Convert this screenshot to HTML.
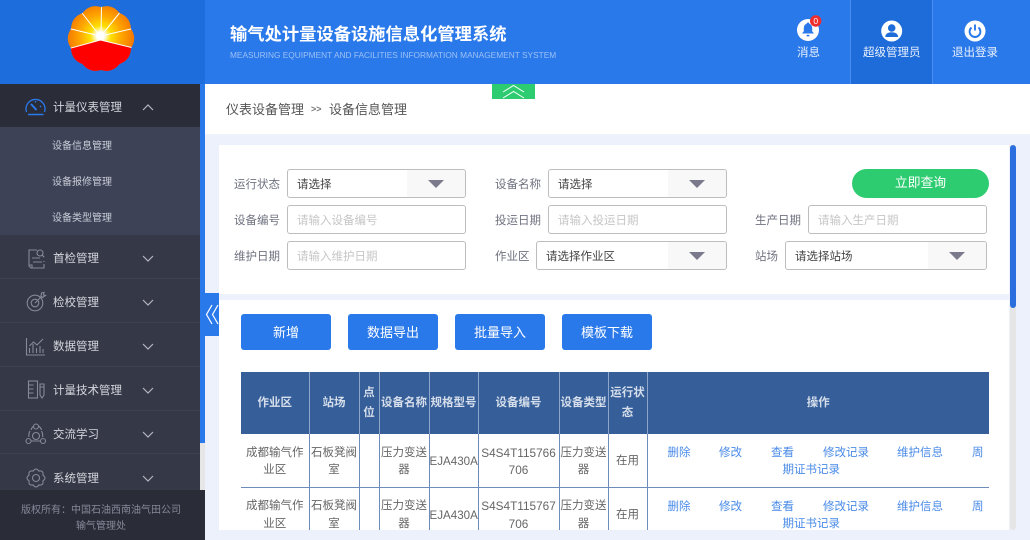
<!DOCTYPE html>
<html lang="zh"><head><meta charset="utf-8"><title>输气处计量设备设施信息化管理系统</title>
<style>
*{box-sizing:border-box;margin:0;padding:0}
html,body{width:1030px;height:540px;overflow:hidden;background:#edf1fb;font-family:"Liberation Sans","Noto Sans CJK SC",sans-serif}
.a{position:absolute;white-space:nowrap}
.t{position:absolute;white-space:nowrap;line-height:18px;font-size:11.5px}
.menu{color:#d5d7de;left:53px;margin-top:1px}
.sub{color:#c9ccd6;left:52px;font-size:10px;margin-top:2px}
.lb{color:#6f7280;margin-top:1px}
.box{position:absolute;height:29px;background:#fff;border:1px solid #bdbdbd;border-radius:3px;font-size:11.5px;line-height:31px;padding-left:9px;color:#444}
.ph{color:#c6c6c6}
.ar{position:absolute;right:0;top:0;bottom:0;width:58px;background:#f8f8f9;border-radius:0 3px 3px 0}
.ar:after{content:"";position:absolute;left:21px;top:10px;border-left:8px solid transparent;border-right:8px solid transparent;border-top:8px solid #7a7a8c}
.btn{position:absolute;top:314px;width:90px;height:36px;background:#2a79eb;border-radius:3px;color:#fff;font-size:13px;line-height:38px;text-align:center}
table{position:absolute;left:0;top:0;width:748px;table-layout:fixed;border-collapse:collapse;font-size:11.5px;line-height:17.3px;text-align:center;color:#666}
th{background:#365f9a;color:#d5deea;font-weight:bold;height:62px;border-left:1px solid #8ea6ca;border-right:1px solid #8ea6ca;padding:1px 0 0;line-height:19.5px}
td{height:53.5px;border-left:1px solid #6d8cbb;border-right:1px solid #6d8cbb;border-bottom:1px solid #6d8cbb;padding:3px 0 0;position:relative;word-break:break-all}
th:first-child,td:first-child{border-left:0}th:last-child,td:last-child{border-right:0}
td a{position:absolute;color:#4a8be8;white-space:nowrap;text-decoration:none}
.l{font-size:11.8px}
.n{white-space:nowrap;word-break:normal;font-size:11.6px;overflow:visible}
</style></head><body>

<div class="a" style="left:205px;top:0;width:825px;height:84px;background:#2a79eb"></div>
<div class="a" style="left:0;top:0;width:205px;height:84px;background:#1d6ddd"></div>
<div class="a" style="left:850px;top:0;width:83px;height:84px;background:#1e6cd9;border-left:1px solid #4a8df0;border-right:1px solid #4a8df0"></div>

<svg class="a" style="left:0;top:0" width="205" height="84" viewBox="0 0 205 84">
<defs>
<radialGradient id="g" gradientUnits="userSpaceOnUse" cx="100.5" cy="36" r="37">
<stop offset="0" stop-color="#fff"/><stop offset=".1" stop-color="#fff"/><stop offset=".28" stop-color="#ffe000"/><stop offset=".55" stop-color="#ffa800"/><stop offset="1" stop-color="#f06a00"/>
</radialGradient>
<clipPath id="fl"><path d="M101 7Q112.3 3.800 119.500 13Q130.500 17 131 28.800Q137.500 38.500 131 48.200Q130.500 60 119.500 64Q112.300 73.200 101 70Q89.700 73.200 82.500 64Q71.500 60 71 48.200Q64.500 38.500 71 28.800Q71.500 17 82.500 13Q89.700 3.800 101 7Z"/></clipPath>
</defs>
<g clip-path="url(#fl)">
<rect x="60" y="0" width="82" height="80" fill="url(#g)"/>
<polygon points="100.500,40 140,50 140,80 60,80 60,51" fill="#f00"/>
<g stroke="#fff" stroke-width="1"><path d="M101 36L101.500 6M101 36L119.500 13M101 36L133 28.500M100 36L82 13M100 36L69 28.500"/><path d="M100.500 40L60 51M100.500 40L140 49.500"/></g>
<circle cx="100.500" cy="35.500" r="4" fill="#fff"/>
</g>
</svg>

<div class="a" style="left:230px;top:21px;font-size:17.3px;line-height:26px;font-weight:bold;color:#fff">输气处计量设备设施信息化管理系统</div>
<div class="a" style="left:230px;top:49px;font-size:8.34px;line-height:12px;color:#9cc0f5">MEASURING EQUIPMENT AND FACILITIES INFORMATION MANAGEMENT SYSTEM</div>

<svg class="a" style="left:790px;top:10px" width="210" height="36" viewBox="790 10 210 36">
<circle cx="808" cy="30" r="11" fill="#fff"/>
<path d="M808 22.5c-.8 0-1.3.6-1.4 1.2-2 .8-2.8 2.400-2.800 4.500v3l-1.800 2.300h12l-1.800-2.300v-3c0-2.100-.8-3.700-2.800-4.500-.1-.6-.6-1.200-1.400-1.200z" fill="#2a79eb"/>
<rect x="806.500" y="34.800" width="3" height="1.600" rx=".8" fill="#2a79eb"/>
<circle cx="815.700" cy="21" r="5.700" fill="#ee2d2d"/>
<text x="815.700" y="24" font-size="8.500" fill="#fff" text-anchor="middle" font-family="Liberation Sans">0</text>
<circle cx="891.700" cy="31" r="10.500" fill="#fff"/>
<circle cx="891.700" cy="28" r="3.800" fill="#1e6cd9"/>
<path d="M885.300 37c0-3.500 3-4.800 6.400-4.800s6.400 1.300 6.400 4.800z" fill="#1e6cd9"/>
<circle cx="975" cy="31" r="10.500" fill="#fff"/>
<path d="M971.500 27.500a5.400 5.400 0 1 0 7 0" fill="none" stroke="#2a79eb" stroke-width="1.900"/>
<path d="M975 24.500v6" stroke="#2a79eb" stroke-width="1.900"/>
</svg>
<div class="t" style="left:797px;top:44px;color:#e8f0fd">消息</div>
<div class="t" style="left:863px;top:44px;color:#e8f0fd">超级管理员</div>
<div class="t" style="left:952px;top:44px;color:#e8f0fd">退出登录</div>

<!-- sidebar -->
<div class="a" style="left:0;top:84px;width:200px;height:406px;background:#353846"></div>
<div class="a" style="left:0;top:84px;width:200px;height:43px;background:#2a2c38"></div>
<div class="a" style="left:0;top:127px;width:200px;height:108px;background:#3d4257"></div>
<div class="a" style="left:0;top:278px;width:200px;height:1px;background:#3e4150"></div>
<div class="a" style="left:0;top:322px;width:200px;height:1px;background:#3e4150"></div>
<div class="a" style="left:0;top:366px;width:200px;height:1px;background:#3e4150"></div>
<div class="a" style="left:0;top:410px;width:200px;height:1px;background:#3e4150"></div>
<div class="a" style="left:0;top:453px;width:200px;height:1px;background:#3e4150"></div>
<div class="a" style="left:200px;top:84px;width:5px;height:406px;background:#e6e6e6"></div>
<div class="a" style="left:200px;top:84px;width:5px;height:359px;background:#2a79eb"></div>
<div class="a" style="left:0;top:490px;width:205px;height:50px;background:#2a2c38"></div>

<div class="t menu" style="top:98px">计量仪表管理</div>
<div class="t sub" style="top:136px">设备信息管理</div>
<div class="t sub" style="top:172px">设备报修管理</div>
<div class="t sub" style="top:208px">设备类型管理</div>
<div class="t menu" style="top:249px">首检管理</div>
<div class="t menu" style="top:293px">检校管理</div>
<div class="t menu" style="top:337px">数据管理</div>
<div class="t menu" style="top:381px">计量技术管理</div>
<div class="t menu" style="top:425px">交流学习</div>
<div class="t menu" style="top:469px">系统管理</div>
<div class="a" style="left:21px;top:500px;font-size:10px;line-height:18px;color:#858999">版权所有<span style="font-family:'Noto Sans CJK TC',sans-serif">：</span>中国石油西南油气田公司</div>
<div class="a" style="left:76px;top:518px;font-size:10px;line-height:18px;color:#858999">输气管理处</div>

<svg class="a" style="left:0;top:84px" width="200" height="406" viewBox="0 84 200 406" fill="none" stroke-width="1">
<g stroke="#b5b7c0" stroke-width="1.200"><path d="M143 110l5-5 5 5"/><path d="M143 256l5 5 5-5M143 300l5 5 5-5M143 344l5 5 5-5M143 388l5 5 5-5M143 432l5 5 5-5M143 476l5 5 5-5"/></g>
<g stroke="#2a79eb" stroke-width="1.300"><path d="M26.500 112A9.500 9.500 0 1 1 44.500 112"/><path d="M31 104l5.500 6" stroke-width="2"/><path d="M28 114.500h15.500" stroke-width="1.500"/><path d="M35.500 101v1.500M41 106l-1 1"/></g>
<g stroke="#858998" stroke-width="1.100">
<path d="M37 250h-8v16l2 2h13v-4M44 262v-1M32 258h8M33 262h9M29 265h3v3"/><circle cx="40" cy="253" r="3"/><path d="M42.200 255.200l2 2"/>
<circle cx="35" cy="303" r="7.800"/><circle cx="35" cy="303" r="3.800"/><path d="M35 303l7-7M41 296l.5-3 2.500-.5-.5 2.500 2 .5-3 2z"/>
<path d="M26.500 338v17h18.500M29.500 353v-5M33 353v-9M36.500 353v-5M40 353v-7M43 353v-4M29.500 346l4-4 3.500 3 6-6"/>
<rect x="28.500" y="381" width="9" height="17"/><path d="M28.500 385h5M28.500 389h5M28.500 393h5"/><path d="M40 384h4v11l-2 3-2-3zM40 387h4"/>
<path d="M31 430a6.500 6.500 0 0 1 3-4M38.500 426a7 7 0 0 1 3 4M31 441h9"/><circle cx="36" cy="426.500" r="2.500"/><circle cx="28.500" cy="441" r="2.500"/><circle cx="43" cy="441" r="2.500"/><circle cx="36" cy="436" r="3.500"/><path d="M29 437a9 9 0 0 1 1-6M42.500 437a9 9 0 0 0-1-6"/>
<g transform="translate(36 478)"><path d="M6.900-2.900Q11 0 6.900 2.900Q7.800 7.800 2.900 6.900Q0 11-2.900 6.900Q-7.800 7.800-6.900 2.900Q-11 0-6.900-2.900Q-7.800-7.800-2.900-6.900Q0-11 2.900-6.900Q7.800-7.800 6.900-2.900Z"/><circle r="3.500"/></g>
</g>
</svg>

<!-- breadcrumb -->
<div class="a" style="left:205px;top:84px;width:825px;height:50px;background:#fff"></div>
<div class="a" style="left:492px;top:84px;width:43px;height:15px;background:#2ecc71"></div>
<svg class="a" style="left:492px;top:84px" width="43" height="15" fill="none" stroke="#fff" stroke-width="1"><path d="M11 8l10.500-6.500L32 8M11 14l10.500-6.500L32 14"/></svg>
<div class="a" style="left:226px;top:100px;font-size:13px;line-height:19px;color:#555">仪表设备管理</div>
<div class="a" style="left:311px;top:103px;font-size:9px;line-height:13px;color:#777;font-weight:bold">&gt;&gt;</div>
<div class="a" style="left:329px;top:100px;font-size:13px;line-height:19px;color:#555">设备信息管理</div>

<!-- collapse tab -->
<div class="a" style="left:205px;top:293px;width:14px;height:43px;background:#2a79eb"></div>
<svg class="a" style="left:205px;top:293px" width="15" height="43" fill="none" stroke="#fff" stroke-width="1.200"><path d="M7 12L1.500 21.500 7 31M13 12L7.500 21.500 13 31"/></svg>

<!-- panel 1 -->
<div class="a" style="left:219px;top:145px;width:790px;height:149px;background:#fff"></div>
<div class="t lb" style="left:234px;top:175px">运行状态</div>
<div class="t lb" style="left:234px;top:211px">设备编号</div>
<div class="t lb" style="left:234px;top:247px">维护日期</div>
<div class="t lb" style="left:495px;top:175px">设备名称</div>
<div class="t lb" style="left:495px;top:211px">投运日期</div>
<div class="t lb" style="left:495px;top:247px">作业区</div>
<div class="t lb" style="left:755px;top:211px">生产日期</div>
<div class="t lb" style="left:755px;top:247px">站场</div>
<div class="box" style="left:287px;top:169px;width:179px">请选择<i class="ar"></i></div>
<div class="box ph" style="left:287px;top:205px;width:179px">请输入设备编号</div>
<div class="box ph" style="left:287px;top:241px;width:179px">请输入维护日期</div>
<div class="box" style="left:548px;top:169px;width:179px">请选择<i class="ar"></i></div>
<div class="box ph" style="left:548px;top:205px;width:179px">请输入投运日期</div>
<div class="box" style="left:536px;top:241px;width:191px">请选择作业区<i class="ar"></i></div>
<div class="box ph" style="left:808px;top:205px;width:179px">请输入生产日期</div>
<div class="box" style="left:785px;top:241px;width:202px">请选择站场<i class="ar"></i></div>
<div class="a" style="left:852px;top:169px;width:137px;height:29px;border-radius:15px;background:#2ecc71;color:#fff;font-size:12.800px;line-height:28px;text-align:center">立即查询</div>

<!-- panel 2 -->
<div class="a" style="left:219px;top:300px;width:790px;height:230px;background:#fff"></div>
<div class="btn" style="left:241px">新增</div>
<div class="btn" style="left:348px">数据导出</div>
<div class="btn" style="left:455px">批量导入</div>
<div class="btn" style="left:562px">模板下载</div>

<div class="a" style="left:241px;top:372px;width:748px;height:158px;overflow:hidden;white-space:normal">
<table>
<colgroup><col style="width:68px"><col style="width:50px"><col style="width:20px"><col style="width:50px"><col style="width:49px"><col style="width:81px"><col style="width:49px"><col style="width:39px"><col></colgroup>
<tr><th>作业区</th><th>站场</th><th>点位</th><th>设备名称</th><th>规格型号</th><th>设备编号</th><th>设备类型</th><th>运行状态</th><th>操作</th></tr>
<tr><td>成都输气作业区</td><td>石板凳阀室</td><td></td><td>压力变送器</td><td class="n">EJA430A</td><td class="l">S4S4T115766<br>706</td><td>压力变送器</td><td>在用</td>
<td><a style="left:20px;top:10.500px">删除</a><a style="left:71.500px;top:10.500px">修改</a><a style="left:123.500px;top:10.500px">查看</a><a style="left:175.500px;top:10.500px">修改记录</a><a style="left:249.500px;top:10.500px">维护信息</a><a style="left:324.500px;top:10.500px">周</a><a style="left:135px;top:28px">期证书记录</a></td></tr>
<tr><td>成都输气作业区</td><td>石板凳阀室</td><td></td><td>压力变送器</td><td class="n">EJA430A</td><td class="l">S4S4T115767<br>706</td><td>压力变送器</td><td>在用</td>
<td><a style="left:20px;top:10.500px">删除</a><a style="left:71.500px;top:10.500px">修改</a><a style="left:123.500px;top:10.500px">查看</a><a style="left:175.500px;top:10.500px">修改记录</a><a style="left:249.500px;top:10.500px">维护信息</a><a style="left:324.500px;top:10.500px">周</a><a style="left:135px;top:28px">期证书记录</a></td></tr>
</table>
</div>

<!-- main scrollbar -->
<div class="a" style="left:1010px;top:145px;width:6px;height:385px;background:#e6e6e6;border-radius:3px"></div>
<div class="a" style="left:1010px;top:145px;width:6px;height:163px;background:#2a6fdd;border-radius:3px"></div>
</body></html>
